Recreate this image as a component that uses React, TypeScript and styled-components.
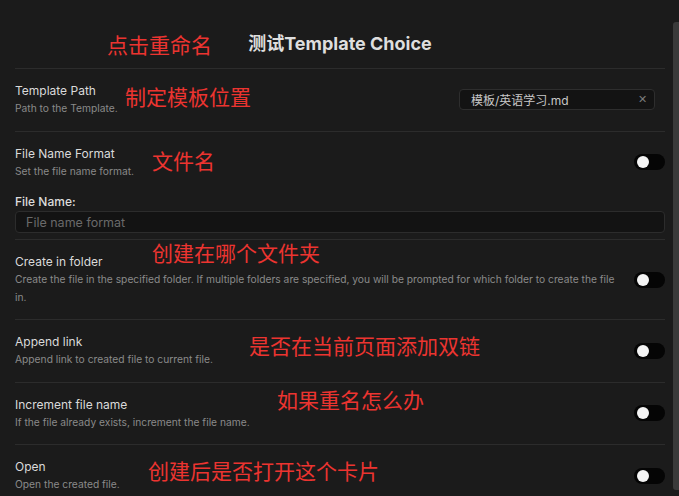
import React from "react";
import styled, { createGlobalStyle } from "styled-components";

const Global = createGlobalStyle`
  html, body { margin: 0; padding: 0; background: #1b1b1b; }
  body { font-family: Inter, "Noto Sans", "Noto Sans CJK SC", sans-serif; }
  * { box-sizing: border-box; }
`;

const Page = styled.div`
  position: relative;
  display: flex;
  align-items: flex-start;
  width: 679px;
  height: 496px;
  overflow: hidden;
  background: #1b1b1b;
`;

const Content = styled.div`
  flex: 1;
  padding: 0 8px 0 15px;
`;

const ScrollTrack = styled.div`
  width: 6px;
  height: 496px;
  padding-top: 22px;
  padding-bottom: 6px;
  display: flex;
`;

const ScrollThumb = styled.div`
  flex: 1;
  background: #3a3a3a;
  border-radius: 3px 0 0 3px;
`;

const Title = styled.h2`
  margin: 33px 0 13px;
  text-align: center;
  font-size: 18px;
  line-height: 22px;
  font-weight: 700;
  color: #dedede;
  font-family: Inter, "Noto Sans CJK SC", sans-serif;
`;

const Row = styled.div`
  display: flex;
  align-items: center;
  border-top: 1px solid #2c2c2c;
  padding: 13px 0;
`;

const Info = styled.div`
  flex: 1;
  min-width: 0;
  margin-right: 16px;
`;

const Name = styled.div`
  font-size: 12px;
  line-height: 18px;
  color: #dadada;
`;

const Desc = styled.div`
  font-size: 10.25px;
  line-height: 17.5px;
  color: #8a8a8a;
`;

const Toggle = styled.div`
  width: 31px;
  height: 16px;
  border-radius: 8px;
  background: #050505;
  display: flex;
  align-items: center;
  padding-left: 3px;
  flex-shrink: 0;
`;

const Knob = styled.div`
  width: 12px;
  height: 12px;
  border-radius: 50%;
  background: #f4f4f4;
`;

const PathInput = styled.div`
  width: 196px;
  height: 21px;
  margin-right: 10px;
  background: #131313;
  border: 1px solid #2e2e2e;
  border-radius: 4px;
  display: flex;
  align-items: center;
  justify-content: space-between;
  padding: 0 7px 0 11px;
  font-size: 12px;
  color: #c8c8c8;
  font-family: Inter, "Noto Sans CJK SC", sans-serif;
  flex-shrink: 0;
`;

const Clear = styled.span`
  font-size: 11px;
  color: #7a7a7a;
  line-height: 1;
`;

const FieldLabel = styled.div`
  font-size: 12px;
  line-height: 18px;
  font-weight: 500;
  color: #dcdcdc;
`;

const TextInput = styled.input`
  display: block;
  width: 100%;
  height: 22px;
  margin: 0 0 6px;
  background: #131313;
  border: 1px solid #2c2c2c;
  border-radius: 4px;
  padding: 0 10px;
  font-family: Inter, sans-serif;
  font-size: 12.5px;
  color: #ccc;
  outline: none;
  &::placeholder { color: #6a6a6a; }
`;

const Annotation = styled.div<{ $x: number; $y: number }>`
  position: absolute;
  left: ${(p) => p.$x}px;
  top: ${(p) => p.$y - 11}px;
  font-family: "Noto Sans CJK SC", sans-serif;
  font-size: 21px;
  line-height: 22px;
  color: #ec3430;
  white-space: nowrap;
`;

const Switch = () => (
  <Toggle>
    <Knob />
  </Toggle>
);

const notes: { text: string; x: number; y: number }[] = [
  { text: "点击重命名", x: 107, y: 44 },
  { text: "制定模板位置", x: 125, y: 96 },
  { text: "文件名", x: 152, y: 160 },
  { text: "创建在哪个文件夹", x: 152, y: 252 },
  { text: "是否在当前页面添加双链", x: 249, y: 345 },
  { text: "如果重名怎么办", x: 277, y: 399 },
  { text: "创建后是否打开这个卡片", x: 148, y: 470 },
];

export default function App() {
  return (
    <Page>
      <Global />
      <Content>
        <Title>测试Template Choice</Title>
        <Row>
          <Info>
            <Name>Template Path</Name>
            <Desc>Path to the Template.</Desc>
          </Info>
          <PathInput>
            <span>模板/英语学习.md</span>
            <Clear>✕</Clear>
          </PathInput>
        </Row>
        <Row>
          <Info>
            <Name>File Name Format</Name>
            <Desc>Set the file name format.</Desc>
          </Info>
          <Switch />
        </Row>
        <FieldLabel>File Name:</FieldLabel>
        <TextInput placeholder="File name format" readOnly />
        <Row>
          <Info>
            <Name>Create in folder</Name>
            <Desc>
              Create the file in the specified folder. If multiple folders are specified, you will be prompted for which
              folder to create the file in.
            </Desc>
          </Info>
          <Switch />
        </Row>
        <Row>
          <Info>
            <Name>Append link</Name>
            <Desc>Append link to created file to current file.</Desc>
          </Info>
          <Switch />
        </Row>
        <Row>
          <Info>
            <Name>Increment file name</Name>
            <Desc>If the file already exists, increment the file name.</Desc>
          </Info>
          <Switch />
        </Row>
        <Row>
          <Info>
            <Name>Open</Name>
            <Desc>Open the created file.</Desc>
          </Info>
          <Switch />
        </Row>
      </Content>
      <ScrollTrack>
        <ScrollThumb />
      </ScrollTrack>
      {notes.map((n) => (
        <Annotation key={n.text} $x={n.x} $y={n.y}>
          {n.text}
        </Annotation>
      ))}
    </Page>
  );
}
